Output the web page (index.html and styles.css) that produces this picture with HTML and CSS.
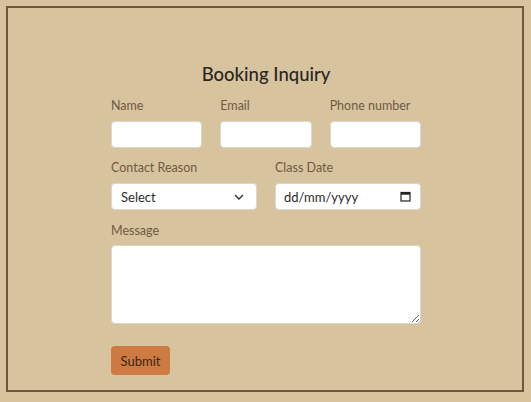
FILE: index.html
```html
<!DOCTYPE html>
<html lang="en-GB">
<head>
<meta charset="utf-8">
<title>Booking Inquiry</title>
<link rel="stylesheet" href="styles.css">
</head>
<body>
<div class="frame">
  <form class="form">
    <h2 class="title">Booking Inquiry</h2>
    <div class="row row-3">
      <div class="field">
        <label class="label" for="name">Name</label>
        <input class="control" id="name" type="text">
      </div>
      <div class="field">
        <label class="label" for="email">Email</label>
        <input class="control" id="email" type="email">
      </div>
      <div class="field">
        <label class="label" for="phone">Phone number</label>
        <input class="control" id="phone" type="tel">
      </div>
    </div>
    <div class="row row-2">
      <div class="field">
        <label class="label" for="reason">Contact Reason</label>
        <div class="select-wrap">
          <select class="control select" id="reason">
            <option>Select</option>
          </select>
          <svg class="chevron" width="10" height="6" viewBox="0 0 10 6" aria-hidden="true">
            <path d="M1 1 L5 5 L9 1" fill="none" stroke="#333" stroke-width="1.4"/>
          </svg>
        </div>
      </div>
      <div class="field">
        <label class="label" for="date">Class Date</label>
        <div class="date-wrap">
          <input class="control date" id="date" type="text" placeholder="dd/mm/yyyy">
          <svg class="cal" width="11" height="11" viewBox="0 0 11 11" aria-hidden="true">
            <rect x="1" y="1.5" width="9" height="8.5" fill="none" stroke="#222" stroke-width="1.2"/>
            <rect x="1" y="1.5" width="9" height="2.2" fill="#222"/>
          </svg>
        </div>
      </div>
    </div>
    <div class="row row-msg">
      <div class="field">
        <label class="label label-msg" for="msg">Message</label>
        <textarea class="control textarea" id="msg"></textarea>
      </div>
    </div>
    <button class="submit" type="button">Submit</button>
  </form>
</div>
</body>
</html>
```

FILE: styles.css
```css
* { box-sizing: border-box; }
html, body { margin: 0; padding: 0; }
body {
  background: #d8c39f;
  padding: 6px 7px 10px 6px;
  font-family: "Lato", "Open Sans", sans-serif;
}
.frame {
  border: 2px solid #6e5838;
  height: 386px;
  display: flex;
  justify-content: center;
}
.form {
  width: 310px;
  margin-left: 2px;
  display: flex;
  flex-direction: column;
  padding-top: 54px;
}
.title {
  margin: 0 0 12px 0;
  text-align: center;
  font-family: "Lato", "Open Sans", sans-serif;
  font-weight: 500;
  font-size: 18.5px;
  line-height: 24px;
  color: #2b2722;
}
.row {
  display: grid;
  gap: 18px;
  margin-bottom: 12px;
}
.row-3 { grid-template-columns: minmax(0, 1fr) minmax(0, 1fr) minmax(0, 1fr); }
.row-2 { grid-template-columns: minmax(0, 1fr) minmax(0, 1fr); margin-bottom: 13px; }
.row-msg { margin-bottom: 22px; }
.field { display: flex; flex-direction: column; min-width: 0; }
.label {
  font-size: 12.5px;
  line-height: 16px;
  color: #6e5a42;
  margin-bottom: 7px;
}
.label-msg { margin-bottom: 6px; }
.control {
  width: 100%;
  height: 27px;
  background: #fff;
  border: 1px solid #dcd6cc;
  border-radius: 4px;
  font-family: "Lato", "Open Sans", sans-serif;
  font-size: 13px;
  color: #2b2b2b;
  padding: 0 8px;
  margin: 0;
  outline: none;
}
.select-wrap, .date-wrap { position: relative; }
.select {
  -webkit-appearance: none;
  appearance: none;
  padding-left: 9px;
}
.chevron {
  position: absolute;
  right: 13px;
  top: 11px;
  pointer-events: none;
}
.date { padding-left: 8px; }
.date::placeholder { color: #2b2b2b; opacity: 1; }
.cal {
  position: absolute;
  right: 10px;
  top: 8px;
  pointer-events: none;
}
.textarea {
  display: block;
  height: 79px;
  resize: vertical;
}
.submit {
  align-self: flex-start;
  width: 59px;
  height: 29px;
  background: #cd7b42;
  border: none;
  border-radius: 4px;
  color: #3a2516;
  font-family: "Lato", "Open Sans", sans-serif;
  font-size: 13px;
  padding: 0;
}
```
